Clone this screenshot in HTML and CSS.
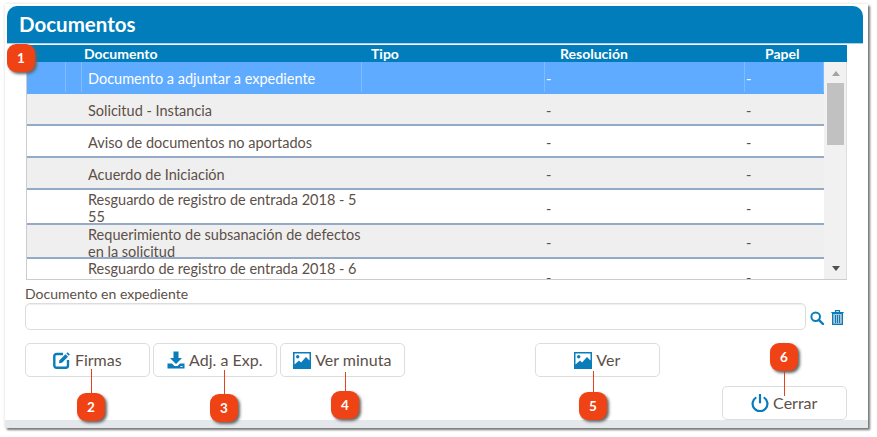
FILE: index.html
```html
<!DOCTYPE html>
<html lang="es">
<head>
<meta charset="utf-8">
<title>Documentos</title>
<link rel="stylesheet" href="styles.css">
</head>
<body>
<div class="win">
  <h1 class="title">Documentos</h1>
  <div class="content">
    <div class="thead">
      <span></span><span></span>
      <span class="th-doc">Documento</span>
      <span class="th-tipo">Tipo</span>
      <span class="th-res">Resolución</span>
      <span class="th-pap">Papel</span>
    </div>
    <div class="tbody">
      <div class="rows">
        <div class="row sel"><span></span><span></span><span class="doc">Documento a adjuntar a expediente</span><span></span><span class="val">-</span><span class="val">-</span></div>
        <div class="row alt"><span></span><span></span><span class="doc">Solicitud - Instancia</span><span></span><span class="val">-</span><span class="val">-</span></div>
        <div class="row"><span></span><span></span><span class="doc">Aviso de documentos no aportados</span><span></span><span class="val">-</span><span class="val">-</span></div>
        <div class="row alt"><span></span><span></span><span class="doc">Acuerdo de Iniciación</span><span></span><span class="val">-</span><span class="val">-</span></div>
        <div class="row two"><span></span><span></span><span class="doc"><span>Resguardo de registro de entrada 2018 - 5<br>55</span></span><span></span><span class="val">-</span><span class="val">-</span></div>
        <div class="row two alt"><span></span><span></span><span class="doc"><span>Requerimiento de subsanación de defectos<br>en la solicitud</span></span><span></span><span class="val">-</span><span class="val">-</span></div>
        <div class="row last"><span></span><span></span><span class="doc">Resguardo de registro de entrada 2018 - 6</span><span></span><span class="val">-</span><span class="val">-</span></div>
      </div>
      <div class="scrollbar">
        <div class="arrow up"></div>
        <div class="thumb"></div>
        <div class="arrow down"></div>
      </div>
    </div>
    <label class="field-label">Documento en expediente</label>
    <div class="field">
      <div class="input"></div>
      <svg class="ic-search" viewBox="0 0 14 14" width="14" height="14"><circle cx="5.700" cy="5.700" r="4.300" fill="none" stroke="#0a7cba" stroke-width="2"/><path d="M8.800 8.800 13 13" stroke="#0a7cba" stroke-width="2.400" stroke-linecap="round"/></svg>
      <svg class="ic-trash" viewBox="0 0 13 15" width="13" height="15"><path d="M4.500 2V.7h4V2M.3 2.500h12.400" fill="none" stroke="#0a7cba" stroke-width="1.200"/><path d="M1.600 3.500h9.800v10.900H1.600z" fill="#a9c3d3" stroke="#0a7cba" stroke-width="1.200"/><path d="M4.500 5v8M6.500 5v8M8.500 5v8" stroke="#0a7cba" stroke-width="1"/></svg>
    </div>
    <div class="actions">
      <button class="btn"><svg viewBox="0 0 18 18" width="18" height="18"><path d="M10 3H3.500A2.200 2.200 0 0 0 1.300 5.200v9.300a2.200 2.200 0 0 0 2.200 2.200h9.300a2.200 2.200 0 0 0 2.200-2.200V9" fill="none" stroke="#0a7cba" stroke-width="2.400"/><path d="M6.500 9.300 12.500 3.300l2.500 2.500-6 6-3 .5z" fill="#0a7cba"/><path d="M14.600 1.300l2.300 2.300-1.200 1.200-2.300-2.300z" fill="#0a7cba"/></svg>Firmas</button>
      <button class="btn"><svg viewBox="0 0 18 18" width="18" height="18"><path d="M6.500.5h5v6.500h3.500L9 13 3 7h3.500z" fill="#0a7cba"/><path d="M.5 12.500h4.500L7.500 15h3l2.500-2.500h4.500v5H.5z" fill="#0a7cba"/><path d="M13.500 15.500h2" stroke="#fff" stroke-width="1"/></svg>Adj. a Exp.</button>
      <button class="btn"><svg viewBox="0 0 18 17" width="18" height="17"><path d="M0 0h18v17H0z" fill="#0a7cba"/><path d="M1.500 1.500h15v7l-3.500-3.500-5 5.500-2-2-4.500 4z" fill="#fff"/><circle cx="4.700" cy="4.700" r="1.700" fill="#0a7cba"/></svg>Ver minuta</button>
      <button class="btn btn-ver"><svg viewBox="0 0 18 17" width="18" height="17"><path d="M0 0h18v17H0z" fill="#0a7cba"/><path d="M1.500 1.500h15v7l-3.500-3.500-5 5.500-2-2-4.500 4z" fill="#fff"/><circle cx="4.700" cy="4.700" r="1.700" fill="#0a7cba"/></svg>Ver</button>
      <button class="btn btn-close"><svg viewBox="0 0 18 18" width="18" height="18"><path d="M5.300 3.400a7.400 7.400 0 1 0 7.400 0" fill="none" stroke="#0a7cba" stroke-width="2.200"/><path d="M9 .5v8" stroke="#0a7cba" stroke-width="2.200" stroke-linecap="round"/></svg>Cerrar</button>
    </div>
  </div>
  <div class="footer"></div>
</div>

<span class="badge b1">1</span>
<span class="lead l2"></span><span class="badge b2">2</span>
<span class="lead l3"></span><span class="badge b3">3</span>
<span class="lead l4"></span><span class="badge b4">4</span>
<span class="lead l5"></span><span class="badge b5">5</span>
<span class="lead l6"></span><span class="badge b6">6</span>
</body>
</html>
```
FILE: styles.css
```css
* { box-sizing: border-box; }
html, body { margin: 0; padding: 0; background: #fff; }
body {
  width: 877px;
  height: 437px;
  padding: 4px 0 0 5px;
  overflow: hidden;
  position: relative;
  font-family: "Lato", "Noto Sans", sans-serif;
  color: #5c5048;
}
.win {
  width: 863px;
  height: 424px;
  background: #fff;
  box-shadow: 2px 2px 2px #777, 0 0 3px #ddd;
  position: relative;
  overflow: hidden;
}
.title {
  margin: 2px 5px 0 2px;
  height: 38px;
  padding: 4px 0 0 12px;
  background: #007dba;
  border-radius: 10px 10px 0 0;
  border-bottom: 1px solid #a9d0e4;
  color: #fff;
  font-size: 20.500px;
  line-height: 29px;
  font-weight: 700;
}
.content { padding: 0 21px 0 20px; height: 376px; display: flex; flex-direction: column; position: relative; z-index: 1; }
.thead, .row {
  display: grid;
  grid-template-columns: 40px 16px 280px 183px 200px 1fr;
}
.thead {
  height: 17px;
  margin: 1px 0 0 1px;
  background: #007dba;
  color: #fff;
  font-weight: 700;
  font-size: 14px;
  line-height: 17px;
}
.th-doc { padding-left: 2px; }
.th-tipo { padding-left: 9px; }
.th-res { padding-left: 15px; }
.th-pap { padding-left: 20px; }
.tbody {
  height: 219px;
  margin-left: 1px;
  display: flex;
  border-left: 1px solid #ccc;
  border-bottom: 1px solid #ccc;
  overflow: hidden;
}
.rows { width: 797px; flex: none; overflow: hidden; }
.row {
  height: 32px;
  grid-template-columns: 39px 16px 280px 183px 200px 1fr;
  border-bottom: 2px solid #94aac6;
  font-size: 14.500px;
  line-height: 17px;
  align-items: stretch;
}
.row > span { border-right: 1px solid transparent; display: flex; align-items: center; white-space: nowrap; padding-top: 2px; }
.row.two > span { padding-top: 1px; }
.row.alt { background: #efefef; }
.row.two { height: 34.500px; }
.row.last { height: 34.500px; border-bottom: 0; }
.row.last > .doc { align-items: flex-start; padding-top: 1px; }
.row.sel { background: #5eabff; color: #fff; border-bottom-color: #5eabff; }
.row.sel > span { border-right-color: #7dbcff; }
.row > .doc { padding-left: 6px; }
.row > .val { padding-left: 1px; }
.scrollbar {
  width: 23px;
  flex: none;
  background: #f1f1f1;
  border-right: 1px solid #ddd;
  display: flex;
  flex-direction: column;
  align-items: center;
  padding: 0 2px 0 3px;
}
.arrow { width: 0; height: 0; border-left: 4px solid transparent; border-right: 4px solid transparent; flex: none; }
.arrow.up { border-bottom: 5px solid #a3a3a3; margin-top: 9px; }
.arrow.down { border-top: 5px solid #505050; margin-top: 121px; }
.thumb { width: 17px; height: 62px; background: #c1c1c1; margin-top: 7px; flex: none; }
.field-label { font-size: 14px; line-height: 16px; margin-top: 6px; height: 16px; }
.field { display: flex; align-items: center; height: 28px; }
.input {
  width: 781px;
  height: 27px;
  flex: none;
  border: 1px solid #ddd;
  border-radius: 5px;
  box-shadow: inset 0 1px 1px #eee;
  margin-right: 4px;
}
.ic-search { margin-right: 7px; margin-top: 3px; }
.ic-trash { margin-top: 3px; }
.actions { display: flex; margin-top: 13px; height: 77px; }
.btn {
  width: 124.500px;
  height: 34px;
  border: 1px solid #ddd;
  border-radius: 5px;
  background: #fff;
  color: #5c5048;
  font: 16px/1 "Lato", "Noto Sans", sans-serif;
  padding: 0;
  display: flex;
  align-items: center;
  justify-content: center;
  gap: 4px;
  margin-right: 3px;
  flex: none;
}
.btn-ver { margin-left: 127.500px; margin-right: 62.500px; }
.btn-close { margin: 43px 0 0 0; position: relative; z-index: 2; }
.footer { position: absolute; left: 0; right: 0; bottom: 0; height: 8px; background: #e4e8eb; z-index: 0; }
.badge {
  position: absolute;
  width: 28px;
  height: 28px;
  border-radius: 9px;
  background: #ef4316;
  color: #fff;
  font: 700 13.500px/28px "Lato", sans-serif;
  text-align: center;
  box-shadow: 2px 2px 3px #666;
  z-index: 5;
}
.lead { position: absolute; width: 1px; background: #e5431b; z-index: 4; }
.b1 { left: 7px; top: 44px; }
.b2 { left: 77px; top: 393px; }
.b3 { left: 210px; top: 394px; }
.b4 { left: 331px; top: 391px; }
.b5 { left: 579px; top: 392px; }
.b6 { left: 770px; top: 343px; }
.l2 { left: 91px; top: 369px; height: 25px; }
.l3 { left: 224px; top: 370px; height: 25px; }
.l4 { left: 345px; top: 372px; height: 20px; }
.l5 { left: 593px; top: 371px; height: 22px; }
.l6 { left: 784px; top: 370px; height: 26px; }
```
